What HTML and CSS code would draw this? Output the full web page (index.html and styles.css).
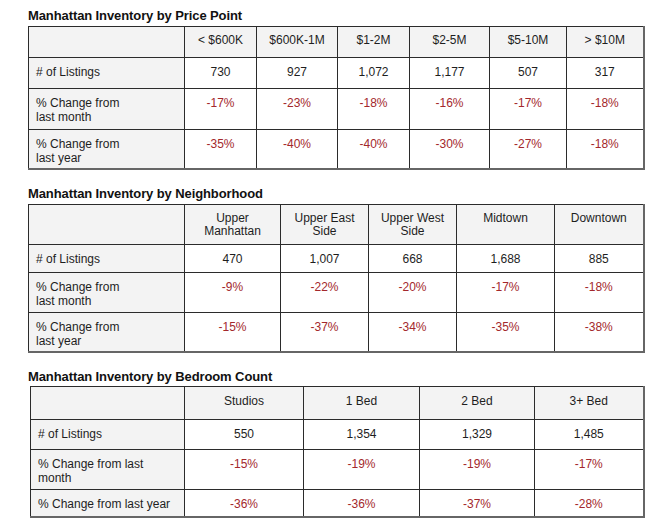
FILE: index.html
```html
<!DOCTYPE html>
<html>
<head>
<meta charset="utf-8">
<link rel="stylesheet" href="styles.css">
</head>
<body>
<main class="page">
  <section class="block">
    <h2 class="title">Manhattan Inventory by Price Point</h2>
    <table class="grid t1">
      <colgroup><col><col><col><col><col><col><col></colgroup>
      <tr class="r-head"><th class="label"></th><th>&lt; $600K</th><th>$600K-1M</th><th>$1-2M</th><th>$2-5M</th><th>$5-10M</th><th>&gt; $10M</th></tr>
      <tr class="r-a"><td class="label"># of Listings</td><td>730</td><td>927</td><td>1,072</td><td>1,177</td><td>507</td><td>317</td></tr>
      <tr class="r-b"><td class="label">% Change from<br>last month</td><td class="neg">-17%</td><td class="neg">-23%</td><td class="neg">-18%</td><td class="neg">-16%</td><td class="neg">-17%</td><td class="neg">-18%</td></tr>
      <tr class="r-c"><td class="label">% Change from<br>last year</td><td class="neg">-35%</td><td class="neg">-40%</td><td class="neg">-40%</td><td class="neg">-30%</td><td class="neg">-27%</td><td class="neg">-18%</td></tr>
    </table>
  </section>

  <section class="block">
    <h2 class="title">Manhattan Inventory by Neighborhood</h2>
    <table class="grid t2">
      <colgroup><col><col><col><col><col><col></colgroup>
      <tr class="r-head"><th class="label"></th><th>Upper<br>Manhattan</th><th>Upper East<br>Side</th><th>Upper West<br>Side</th><th>Midtown</th><th>Downtown</th></tr>
      <tr class="r-a"><td class="label"># of Listings</td><td>470</td><td>1,007</td><td>668</td><td>1,688</td><td>885</td></tr>
      <tr class="r-b"><td class="label">% Change from<br>last month</td><td class="neg">-9%</td><td class="neg">-22%</td><td class="neg">-20%</td><td class="neg">-17%</td><td class="neg">-18%</td></tr>
      <tr class="r-c"><td class="label">% Change from<br>last year</td><td class="neg">-15%</td><td class="neg">-37%</td><td class="neg">-34%</td><td class="neg">-35%</td><td class="neg">-38%</td></tr>
    </table>
  </section>

  <section class="block tight">
    <h2 class="title">Manhattan Inventory by Bedroom Count</h2>
    <table class="grid t3">
      <colgroup><col><col><col><col><col></colgroup>
      <tr class="r-head"><th class="label"></th><th>Studios</th><th>1 Bed</th><th>2 Bed</th><th>3+ Bed</th></tr>
      <tr class="r-a"><td class="label"># of Listings</td><td>550</td><td>1,354</td><td>1,329</td><td>1,485</td></tr>
      <tr class="r-b"><td class="label">% Change from last<br>month</td><td class="neg">-15%</td><td class="neg">-19%</td><td class="neg">-19%</td><td class="neg">-17%</td></tr>
      <tr class="r-c"><td class="label">% Change from last year</td><td class="neg">-36%</td><td class="neg">-36%</td><td class="neg">-37%</td><td class="neg">-28%</td></tr>
    </table>
  </section>
</main>
</body>
</html>
```

FILE: styles.css
```css
* { box-sizing: border-box; }

html, body {
  margin: 0;
  padding: 0;
  background: #ffffff;
}

body {
  font-family: "Liberation Sans", Arial, sans-serif;
  color: #1e1e1e;
  font-size: 12px;
  line-height: 14px;
}

.page {
  display: flex;
  flex-direction: column;
  gap: 16px;
  padding: 8px 0 0 28px;
  width: 659px;
}

.block {
  display: flex;
  flex-direction: column;
  gap: 2px;
}

.block.tight {
  gap: 1px;
}

.title {
  margin: 0;
  font-size: 13px;
  line-height: 16px;
  font-weight: bold;
  letter-spacing: -0.1px;
  color: #111111;
}

.grid {
  border-collapse: collapse;
  table-layout: fixed;
  width: 615px;
  border-right: 2px solid #666666;
  border-bottom: 2px solid #666666;
}

.grid th,
.grid td {
  border: 1px solid #2b2b2b;
  padding: 7px 4px 0 4px;
  vertical-align: top;
  text-align: center;
  font-weight: normal;
  font-size: 12px;
  line-height: 14px;
  color: #1e1e1e;
}

.grid th {
  background: #f3f3f3;
  line-height: 13px;
}

.grid .label {
  background: #f3f3f3;
  text-align: left;
  padding-left: 7px;
}

.grid td.neg {
  color: #a3282c;
}

/* Price point table */
.t1 col:nth-child(1) { width: 156px; }
.t1 col:nth-child(2) { width: 72px; }
.t1 col:nth-child(3) { width: 81px; }
.t1 col:nth-child(4) { width: 72px; }
.t1 col:nth-child(5) { width: 80px; }
.t1 col:nth-child(6) { width: 77px; }
.t1 col:nth-child(7) { width: 77px; }
.t1 .r-head { height: 31px; }
.t1 .r-a { height: 31px; }
.t1 .r-b { height: 41px; }
.t1 .r-c { height: 39px; }

/* Neighborhood table */
.t2 col:nth-child(1) { width: 156px; }
.t2 col:nth-child(2) { width: 96px; }
.t2 col:nth-child(3) { width: 88px; }
.t2 col:nth-child(4) { width: 88px; }
.t2 col:nth-child(5) { width: 98px; }
.t2 col:nth-child(6) { width: 89px; }
.t2 .r-head { height: 40px; }
.t2 .r-a { height: 28px; }
.t2 .r-b { height: 40px; }
.t2 .r-c { height: 40px; }

/* Bedroom table */
.t3 {
  width: 613px;
  margin-left: 2px;
}
.t3 col:nth-child(1) { width: 154px; }
.t3 col:nth-child(2) { width: 119px; }
.t3 col:nth-child(3) { width: 116px; }
.t3 col:nth-child(4) { width: 115px; }
.t3 col:nth-child(5) { width: 109px; }
.t3 .r-head { height: 33px; }
.t3 .r-head th { padding-top: 8px; }
.t3 .r-a { height: 30px; }
.t3 .r-b { height: 40px; }
.t3 .r-c { height: 27px; }
```
